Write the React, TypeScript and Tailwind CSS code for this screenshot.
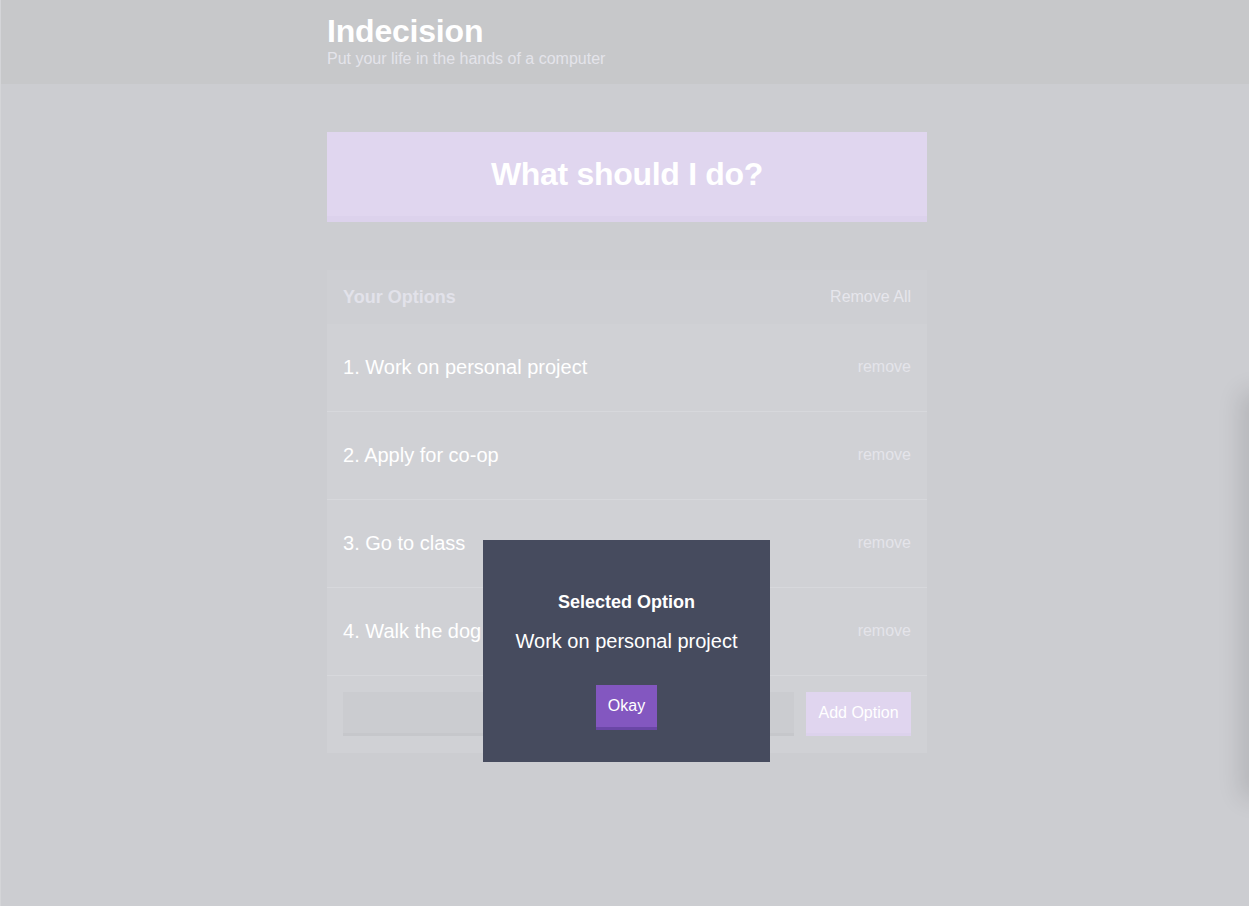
import React from "react";

const options = [
  "Work on personal project",
  "Apply for co-op",
  "Go to class",
  "Walk the dog",
];

export default function App() {
  return (
    <div
      className="relative min-h-[906px] overflow-hidden bg-[#cccdd1] border-l border-[#d4d5d8] pl-[4px]"
      style={{ fontFamily: '"Liberation Sans", Arial, Helvetica, sans-serif' }}
    >
      <header className="-ml-[4px] h-[84px] bg-[#c7c8ca] pl-[4px]">
        <div className="mx-auto w-[600px] pt-[12px]">
          <h1 className="text-[32px] font-bold leading-[38px] text-white tracking-[-0.2px]">
            Indecision
          </h1>
          <p className="text-[16px] leading-[18px] text-[#e4e4ea]">
            Put your life in the hands of a computer
          </p>
        </div>
      </header>

      <main className="mx-auto w-[600px] pt-[48px]">
        <button className="flex h-[90px] w-full items-center justify-center border-b-[6px] border-[#dcd2ec] bg-[#e0d6ef] text-[32px] font-bold text-white tracking-[-0.3px]">
          What should I do?
        </button>

        <section className="mt-[48px] bg-[#d0d1d5]">
          <div className="flex h-[54px] items-center justify-between bg-[#cecfd3] px-[16px]">
            <h3 className="text-[18px] font-bold text-[#e2e2ea]">Your Options</h3>
            <button className="text-[16px] text-[#e6e6ec]">Remove All</button>
          </div>
          {options.map((o, i) => (
            <div
              key={o}
              className="flex h-[88px] items-center justify-between border-b border-[#d7d8dc] px-[16px] pb-[2px]"
            >
              <p className="text-[20px] text-white">
                {i + 1}. {o}
              </p>
              <button className="text-[16px] text-[#e4e4ea]">remove</button>
            </div>
          ))}
          <form className="flex gap-[12px] px-[16px] pt-[16px] pb-[17px]">
            <input className="h-[44px] flex-1 border-b-[3px] border-[#c6c7cb] bg-[#cbccd0] outline-none" />
            <button
              type="button"
              className="h-[44px] w-[105px] border-b-[3px] border-[#dcd2ec] bg-[#e0d5ef] text-[16px] text-white"
            >
              Add Option
            </button>
          </form>
        </section>
      </main>

      <div className="pointer-events-none absolute top-[400px] right-[-40px] h-[390px] w-[40px] shadow-[0_0_24px_8px_rgba(0,0,0,0.12)]" />

      <div className="absolute left-[482px] top-[540px] flex h-[222px] w-[287px] flex-col items-center bg-[#464b5e] pt-[51px] text-white">
        <h3 className="text-[18px] font-bold leading-[22px]">Selected Option</h3>
        <p className="mt-[16px] text-[20px] leading-[24px]">Work on personal project</p>
        <button className="mt-[32px] h-[45px] w-[61px] border-b-[3px] border-[#6a46a6] bg-[#8357c0] text-[16px]">
          Okay
        </button>
      </div>
    </div>
  );
}
